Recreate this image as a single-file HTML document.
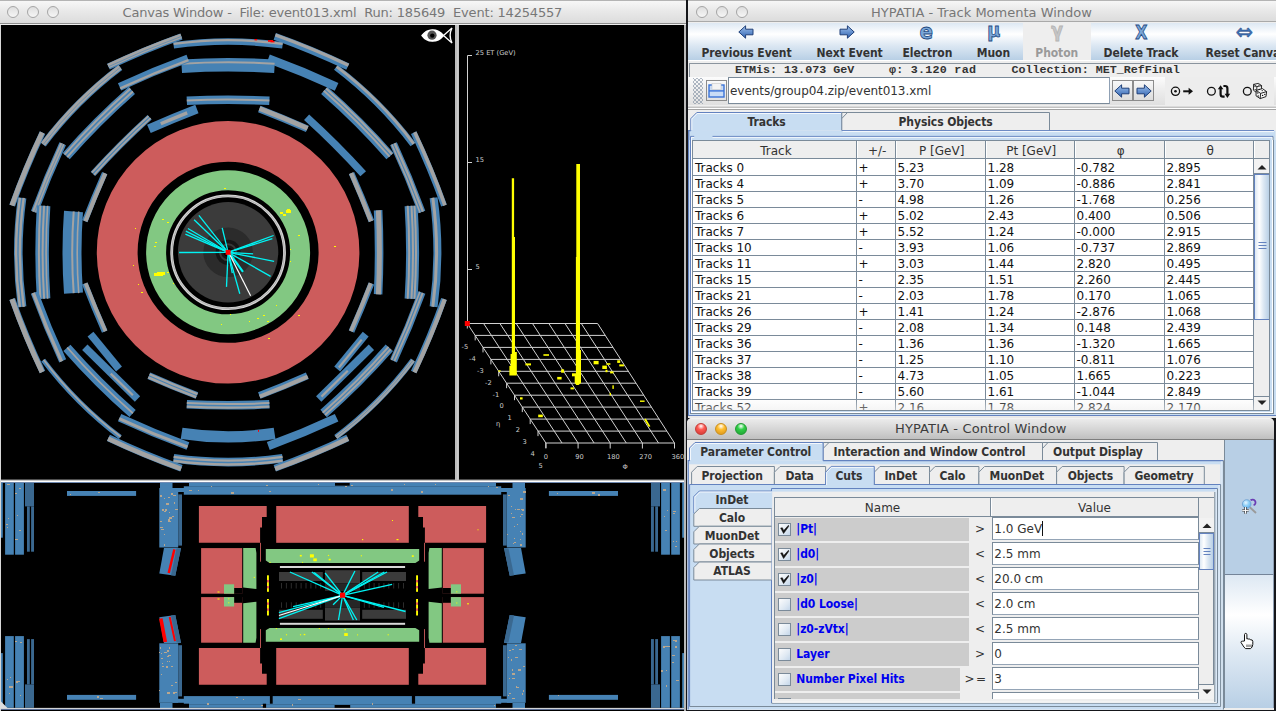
<!DOCTYPE html><html><head><meta charset="utf-8"><title>HYPATIA</title><style>
*{box-sizing:border-box;margin:0;padding:0}
html,body{width:1276px;height:711px;overflow:hidden;background:#15161a;font-family:'DejaVu Sans','Liberation Sans',sans-serif;font-size:12px;color:#333}
.abs,.abs *{position:absolute}
.t{white-space:pre;line-height:1}
.b{font-family:'DejaVu Sans Condensed','DejaVu Sans','Liberation Sans',sans-serif;font-weight:bold;letter-spacing:-0.08px;font-size:12px}
.r{letter-spacing:-0.35px}
.win{position:absolute;overflow:hidden}
.tbar{position:absolute;left:0;right:0;top:0;height:22px;background:linear-gradient(#f7f7f7,#e9e9e9 45%,#dcdcdc);border-bottom:1px solid #a9a9a9;border-top:1px solid #b4b4b4}
.tl{position:absolute;width:12px;height:12px;border-radius:6px;top:6px;border:1px solid #a5a5a5;background:linear-gradient(#dedede,#f6f6f6)}
.ttl{position:absolute;top:5.6px;font-size:13px;color:#777;letter-spacing:0;white-space:pre;line-height:14px}
.og{background:linear-gradient(#dde8f3 0%,#fff 30%,#dde8f3 60%,#b8cfe5 100%)}
.tab{position:absolute;height:18px;background:#eee;border:1px solid #7a8a99;border-bottom:none}
.cell{position:absolute;white-space:pre;line-height:16px;height:16px;font-size:12px;color:#111;letter-spacing:0}
</style></head><body><div class="win" style="left:0;top:0;width:686px;height:711px;background:#000"><svg width="686" height="711" viewBox="0 0 686 711" style="position:absolute;left:0;top:0"><rect x="0" y="0" width="686" height="711" fill="#000"/><g clip-path="url(#cxy)"><clipPath id="cxy"><rect x="1" y="25" width="454" height="455"/></clipPath><g fill="none"><path d="M378.1 210.3Q380.1 252.3 378.1 294.3" stroke="#4682b4" stroke-width="8.6"/><path d="M378.4 210.3Q380.4 252.3 378.4 294.3" stroke="#a3a3a3" stroke-width="5"/><path d="M411.1 205.8Q414.1 252.3 411.1 298.8" stroke="#4682b4" stroke-width="13"/><path d="M414.5 205.8Q417.5 252.3 414.5 298.8" stroke="#a3a3a3" stroke-width="2"/><path d="M411.5 205.8Q414.5 252.3 411.5 298.8" stroke="#a3a3a3" stroke-width="2"/><path d="M407.7 205.8Q410.7 252.3 407.7 298.8" stroke="#a3a3a3" stroke-width="2"/><path d="M433.6 197.8Q441.2 252.3 433.6 306.8" stroke="#4682b4" stroke-width="8"/><path d="M432.8 197.8Q440.4 252.3 432.8 306.8" stroke="#a3a3a3" stroke-width="3"/><path d="M351.5 173.1Q362 196.8 371.4 221.1" stroke="#4682b4" stroke-width="5.8"/><path d="M351.1 173.2Q361.6 197 371 221.3" stroke="#a3a3a3" stroke-width="4.4"/><path d="M393.5 143.8Q409.1 177.3 421.8 212.1" stroke="#4682b4" stroke-width="7.4"/><path d="M394.6 143.3Q410.2 176.9 422.9 211.7" stroke="#a3a3a3" stroke-width="2.4"/><path d="M391.8 144.4Q407.4 178 420.1 212.8" stroke="#a3a3a3" stroke-width="1.6"/><path d="M413.7 132.6Q430.7 168.4 444 205.6" stroke="#4682b4" stroke-width="6"/><path d="M414.7 132.3Q431.6 168 444.9 205.3" stroke="#a3a3a3" stroke-width="3.6"/><path d="M306.6 117.2Q336.3 144.1 363.2 173.8" stroke="#4682b4" stroke-width="7.6"/><path d="M324.3 90.4Q359.3 121.1 390 156.1" stroke="#4682b4" stroke-width="9.6"/><path d="M326.1 88.5Q361.1 119.3 391.9 154.3" stroke="#a3a3a3" stroke-width="2.2"/><path d="M323.8 90.8Q358.8 121.6 389.6 156.6" stroke="#a3a3a3" stroke-width="2"/><path d="M335.9 67.4Q379.8 100.6 413 144.5" stroke="#4682b4" stroke-width="6.2"/><path d="M336.6 66.7Q380.6 99.8 413.7 143.8" stroke="#a3a3a3" stroke-width="2.8"/><path d="M259.3 109Q283.6 118.4 307.3 128.9" stroke="#4682b4" stroke-width="7"/><path d="M259.5 108.5Q283.8 117.9 307.6 128.4" stroke="#a3a3a3" stroke-width="4.6"/><path d="M268.3 58.6Q303.1 71.3 336.6 86.9" stroke="#4682b4" stroke-width="8.6"/><path d="M274.8 36.4Q312 49.7 347.8 66.7" stroke="#4682b4" stroke-width="7"/><path d="M275.4 34.9Q312.6 48.2 348.4 65.2" stroke="#a3a3a3" stroke-width="3.2"/><path d="M186.8 100.8Q228.1 98.8 269.4 100.8" stroke="#4682b4" stroke-width="8.4"/><path d="M186.8 100.6Q228.1 98.6 269.4 100.6" stroke="#a3a3a3" stroke-width="2"/><path d="M181.6 66.3Q228.1 63.3 274.6 66.3" stroke="#4682b4" stroke-width="13.5"/><path d="M181.6 63.7Q228.1 60.7 274.6 63.7" stroke="#a3a3a3" stroke-width="2"/><path d="M173.6 45.3Q228.1 37.7 282.6 45.3" stroke="#4682b4" stroke-width="6.6"/><path d="M173.6 43.9Q228.1 36.3 282.6 43.9" stroke="#a3a3a3" stroke-width="2.4"/><path d="M148.9 128.9Q172.6 118.4 196.9 109" stroke="#4682b4" stroke-width="9"/><path d="M160.8 123.8Q173.9 118.1 187.2 112.8" stroke="#a3a3a3" stroke-width="3.4"/><path d="M119.6 86.9Q153.1 71.3 187.9 58.6" stroke="#4682b4" stroke-width="8"/><path d="M120.2 88.4Q153.7 72.8 188.5 60.1" stroke="#a3a3a3" stroke-width="2.6"/><path d="M108.4 66.7Q144.2 49.7 181.4 36.4" stroke="#4682b4" stroke-width="6.4"/><path d="M108.3 66.2Q144 49.2 181.2 36" stroke="#a3a3a3" stroke-width="4.8"/><path d="M108.4 66.7Q144.2 49.7 181.4 36.4" stroke="#4682b4" stroke-width="0.6"/><path d="M93 173.8Q119.9 144.1 149.6 117.2" stroke="#4682b4" stroke-width="6.2"/><path d="M91.9 172.7Q118.8 143 148.5 116.1" stroke="#a3a3a3" stroke-width="1.8"/><path d="M94 174.8Q120.9 145.1 150.6 118.2" stroke="#a3a3a3" stroke-width="1.8"/><path d="M66.2 156.1Q96.9 121.1 131.9 90.4" stroke="#4682b4" stroke-width="9.4"/><path d="M64.6 154.6Q95.4 119.6 130.4 88.8" stroke="#a3a3a3" stroke-width="2"/><path d="M67.2 157.1Q97.9 122.1 132.9 91.4" stroke="#a3a3a3" stroke-width="2"/><path d="M43.2 144.5Q76.4 100.6 120.3 67.4" stroke="#4682b4" stroke-width="6.4"/><path d="M43 144.3Q76.1 100.3 120.1 67.2" stroke="#a3a3a3" stroke-width="5"/><path d="M43.2 144.5Q76.4 100.6 120.3 67.4" stroke="#4682b4" stroke-width="0.6"/><path d="M84.8 221.1Q94.2 196.8 104.7 173.1" stroke="#4682b4" stroke-width="5.8"/><path d="M85.4 221.3Q94.8 197.1 105.3 173.3" stroke="#a3a3a3" stroke-width="4.2"/><path d="M34.4 212.1Q47.1 177.3 62.7 143.8" stroke="#4682b4" stroke-width="7.2"/><path d="M34.2 212Q46.8 177.2 62.5 143.6" stroke="#a3a3a3" stroke-width="4.6"/><path d="M34.4 212.1Q47.1 177.3 62.7 143.8" stroke="#4682b4" stroke-width="0.6"/><path d="M12.2 205.6Q25.5 168.4 42.5 132.6" stroke="#4682b4" stroke-width="6"/><path d="M11.9 205.5Q25.2 168.3 42.2 132.5" stroke="#a3a3a3" stroke-width="5"/><path d="M73.5 293.1Q70.5 252.3 73.5 211.5" stroke="#4682b4" stroke-width="19"/><path d="M73.7 293.1Q70.7 252.3 73.7 211.5" stroke="#a3a3a3" stroke-width="2"/><path d="M78.7 293.1Q75.7 252.3 78.7 211.5" stroke="#a3a3a3" stroke-width="1.6"/><path d="M43.6 298.8Q40.6 252.3 43.6 205.8" stroke="#4682b4" stroke-width="13.5"/><path d="M40.4 298.8Q37.4 252.3 40.4 205.8" stroke="#a3a3a3" stroke-width="2"/><path d="M44.1 298.8Q41.1 252.3 44.1 205.8" stroke="#a3a3a3" stroke-width="2"/><path d="M47.6 298.8Q44.6 252.3 47.6 205.8" stroke="#a3a3a3" stroke-width="1.6"/><path d="M22.1 306.8Q14.5 252.3 22.1 197.8" stroke="#4682b4" stroke-width="8.6"/><path d="M19.9 306.8Q12.3 252.3 19.9 197.8" stroke="#a3a3a3" stroke-width="2.4"/><path d="M23.7 306.8Q16.1 252.3 23.7 197.8" stroke="#a3a3a3" stroke-width="2.4"/><path d="M104.7 331.5Q94.2 307.8 84.8 283.5" stroke="#4682b4" stroke-width="6"/><path d="M105.5 331.2Q95 307.4 85.6 283.2" stroke="#a3a3a3" stroke-width="3.8"/><path d="M62.7 360.8Q47.1 327.3 34.4 292.5" stroke="#4682b4" stroke-width="7.6"/><path d="M61.6 361.3Q46 327.7 33.3 292.9" stroke="#a3a3a3" stroke-width="3.2"/><path d="M42.5 372Q25.5 336.2 12.2 299" stroke="#4682b4" stroke-width="6"/><path d="M42.1 372.1Q25.1 336.4 11.9 299.1" stroke="#a3a3a3" stroke-width="5"/><path d="M132.6 413.5Q97.6 382.8 66.9 347.8" stroke="#4682b4" stroke-width="9.4"/><path d="M132.9 413.2Q97.9 382.5 67.2 347.5" stroke="#a3a3a3" stroke-width="1.8"/><path d="M120.3 437.2Q76.4 404 43.2 360.1" stroke="#4682b4" stroke-width="4.8"/><path d="M120.7 436.8Q76.8 403.6 43.6 359.7" stroke="#a3a3a3" stroke-width="1.8"/><path d="M196.9 395.6Q172.6 386.2 148.9 375.7" stroke="#4682b4" stroke-width="7"/><path d="M196.2 397.2Q172 387.8 148.2 377.3" stroke="#a3a3a3" stroke-width="2.4"/><path d="M197.5 394.1Q173.3 384.7 149.5 374.2" stroke="#a3a3a3" stroke-width="2.2"/><path d="M187.9 446Q153.1 433.3 119.6 417.7" stroke="#4682b4" stroke-width="8"/><path d="M187.5 446.9Q152.7 434.2 119.2 418.6" stroke="#a3a3a3" stroke-width="3"/><path d="M181.4 468.2Q144.2 454.9 108.4 437.9" stroke="#4682b4" stroke-width="7"/><path d="M181.1 468.9Q143.9 455.6 108.1 438.7" stroke="#a3a3a3" stroke-width="4.6"/><path d="M269.4 404.3Q228.1 406.3 186.8 404.3" stroke="#4682b4" stroke-width="8.6"/><path d="M269.4 406.7Q228.1 408.7 186.8 406.7" stroke="#a3a3a3" stroke-width="2.2"/><path d="M269.4 403.1Q228.1 405.1 186.8 403.1" stroke="#a3a3a3" stroke-width="2"/><path d="M274.6 433.3Q228.1 440.5 181.6 433.3" stroke="#4682b4" stroke-width="11.4"/><path d="M282.6 458.3Q228.1 465.9 173.6 458.3" stroke="#4682b4" stroke-width="8.6"/><path d="M282.6 460.7Q228.1 468.3 173.6 460.7" stroke="#a3a3a3" stroke-width="2.4"/><path d="M282.6 456.9Q228.1 464.5 173.6 456.9" stroke="#a3a3a3" stroke-width="2.2"/><path d="M307.3 375.7Q283.6 386.2 259.3 395.6" stroke="#4682b4" stroke-width="7"/><path d="M307.7 376.6Q283.9 387.1 259.7 396.5" stroke="#a3a3a3" stroke-width="4"/><path d="M336.6 417.7Q303.1 433.3 268.3 446" stroke="#4682b4" stroke-width="8.4"/><path d="M347.8 437.9Q312 454.9 274.8 468.2" stroke="#4682b4" stroke-width="7"/><path d="M348.1 438.7Q312.3 455.6 275.1 468.9" stroke="#a3a3a3" stroke-width="4.6"/><path d="M389.3 347.8Q358.6 382.8 323.6 413.5" stroke="#4682b4" stroke-width="9.8"/><path d="M390.7 349.2Q360 384.2 325 414.9" stroke="#a3a3a3" stroke-width="2"/><path d="M388.5 346.9Q357.7 381.9 322.7 412.7" stroke="#a3a3a3" stroke-width="2"/><path d="M413 360.1Q379.8 404 335.9 437.2" stroke="#4682b4" stroke-width="5.4"/><path d="M413.2 360.3Q380.1 404.3 336.1 437.4" stroke="#a3a3a3" stroke-width="3.6"/><path d="M413.1 360.3Q380 404.2 336.1 437.3" stroke="#4682b4" stroke-width="0.6"/><path d="M371.4 283.5Q362 307.8 351.5 331.5" stroke="#4682b4" stroke-width="6"/><path d="M370.8 283.3Q361.4 307.5 350.9 331.3" stroke="#a3a3a3" stroke-width="4"/><path d="M421.8 292.5Q409.1 327.3 393.5 360.8" stroke="#4682b4" stroke-width="7.6"/><path d="M422.7 292.9Q410 327.7 394.4 361.2" stroke="#a3a3a3" stroke-width="2"/><path d="M419.9 291.7Q407.2 326.5 391.6 360.1" stroke="#a3a3a3" stroke-width="1.6"/><path d="M444 299Q430.7 336.2 413.7 372" stroke="#4682b4" stroke-width="6"/><path d="M444.7 299.3Q431.4 336.5 414.5 372.3" stroke="#a3a3a3" stroke-width="4.2"/><path d="M90.5 334.1L119 369" stroke="#4682b4" stroke-width="7.6"/><path d="M84.8 347.3L137.5 399" stroke="#4682b4" stroke-width="7.6"/><path d="M110.7 373.6L132.9 395.3" stroke="#a3a3a3" stroke-width="2.2"/><path d="M365.7 334.1L337.2 369" stroke="#4682b4" stroke-width="7.6"/><path d="M361.7 339.6L338.9 367.5" stroke="#a3a3a3" stroke-width="2.2"/><path d="M371.4 347.3L318.7 399" stroke="#4682b4" stroke-width="7.6"/><path d="M347.8 370.7L321.5 396.6" stroke="#a3a3a3" stroke-width="2.2"/></g><circle cx="228.1" cy="252.3" r="110.9" fill="none" stroke="#cd5c5c" stroke-width="40.8"/><circle cx="228.1" cy="252.3" r="72" fill="none" stroke="#82c882" stroke-width="20"/><circle cx="228.1" cy="252.3" r="56.4" fill="none" stroke="#d4d4d4" stroke-width="2.8"/><circle cx="228.1" cy="252.3" r="56.4" fill="none" stroke="#a0a0a0" stroke-width="0.7"/><circle cx="228.1" cy="252.3" r="50.2" fill="#3b3b3b"/><circle cx="228.1" cy="252.3" r="24.8" fill="#2b2b2b"/><circle cx="228.1" cy="252.3" r="12.5" fill="#161616"/><circle cx="228.1" cy="252.3" r="8" fill="none" stroke="#383838" stroke-width="2"/><circle cx="228.1" cy="252.3" r="4.5" fill="#000"/><g stroke="#00f4f4" stroke-width="1.3" fill="none"><path d="M228.1 252.3L198.9 215.4"/><path d="M228.1 252.3L194.1 219.7"/><path d="M228.1 252.3L187.9 228.5"/><path d="M228.1 252.3L185.9 231.2"/><path d="M228.1 252.3L185.4 234.2"/><path d="M228.1 252.3L179.1 252.5"/><path d="M228.1 252.3L222.2 227.9"/><path d="M228.1 252.3L273.6 235.5"/><path d="M228.1 252.3L272.4 238.7"/><path d="M228.1 252.3L253.1 253.8"/><path d="M228.1 252.3L274.1 261.3"/><path d="M228.1 252.3L270.6 276.4"/><path d="M228.1 252.3L239.8 293.7"/><path d="M228.1 252.3L226.5 286.9"/><path d="M228.1 252.3L232.3 273.1"/><path d="M231.1 255.3L243 271.8" stroke-width="2.2"/><path d="M229.1 253.3L250.6 295.7" stroke="#fff" stroke-width="1.2"/></g><g fill="#ffff00" shape-rendering="crispEdges"><rect x="224" y="188" width="2" height="1"/><rect x="286" y="210" width="5" height="3"/><rect x="283" y="214" width="3" height="2"/><rect x="280" y="212" width="3" height="2"/><rect x="287" y="209" width="3" height="2"/><rect x="162" y="219" width="2" height="1"/><rect x="167" y="222" width="2" height="1"/><rect x="135" y="228" width="1" height="1"/><rect x="155" y="242" width="2" height="1"/><rect x="154" y="246" width="2" height="1"/><rect x="298" y="235" width="2" height="1"/><rect x="334" y="246" width="2" height="1"/><rect x="290" y="249" width="1" height="1"/><rect x="290" y="261" width="1" height="1"/><rect x="157" y="272" width="6" height="4"/><rect x="154" y="273" width="4" height="3"/><rect x="161" y="272" width="4" height="3"/><rect x="167" y="272" width="2" height="1"/><rect x="133" y="265" width="1" height="1"/><rect x="138" y="284" width="1" height="1"/><rect x="141" y="292" width="2" height="1"/><rect x="173" y="283" width="1" height="1"/><rect x="230" y="314" width="1" height="1"/><rect x="221" y="324" width="1" height="1"/><rect x="249" y="321" width="1" height="1"/><rect x="257" y="318" width="2" height="1"/><rect x="263" y="315" width="2" height="1"/><rect x="267" y="321" width="2" height="1"/><rect x="276" y="305" width="1" height="1"/><rect x="298" y="315" width="2" height="1"/><rect x="268" y="338" width="2" height="1"/></g><rect x="254.5" y="39" width="2.6" height="1.4" fill="#ff0000"/><rect x="268" y="40" width="5" height="1.8" fill="#ff0000"/><rect x="270.5" y="41" width="4" height="1.4" fill="#ff0000"/><rect x="258" y="430" width="1" height="1.8" fill="#ff0000"/><rect x="225.6" y="249.8" width="5" height="5" fill="#ff0000"/></g><g stroke="#d2d2d2" stroke-width="1" fill="none" shape-rendering="auto"><path d="M467.5 55.5V324"/><path d="M467.5 55.5h4.5"/><path d="M467.5 162.5h4.5"/><path d="M467.5 269.5h4.5"/><path d="M467.3 323.5H597.6"/><path d="M467.3 323.5v5"/><path d="M475.2 335.4H605.3"/><path d="M475.2 335.4v5"/><path d="M483 347.4H613"/><path d="M483 347.4v5"/><path d="M490.9 359.4H620.7"/><path d="M490.9 359.4v5"/><path d="M498.7 371.3H628.4"/><path d="M498.7 371.3v5"/><path d="M506.6 383.2H636.1"/><path d="M506.6 383.2v5"/><path d="M514.5 395.2H643.8"/><path d="M514.5 395.2v5"/><path d="M522.3 407.1H651.5"/><path d="M522.3 407.1v5"/><path d="M530.2 419.1H659.2"/><path d="M530.2 419.1v5"/><path d="M538 431.1H666.8"/><path d="M538 431.1v5"/><path d="M545.9 443H674.5"/><path d="M545.9 443v5"/><path d="M467.3 323.5L545.9 443"/><path d="M483.6 323.5L562 443"/><path d="M499.9 323.5L578.1 443"/><path d="M516.2 323.5L594.1 443"/><path d="M532.5 323.5L610.2 443"/><path d="M548.8 323.5L626.3 443"/><path d="M565 323.5L642.4 443"/><path d="M581.3 323.5L658.5 443"/><path d="M597.6 323.5L674.5 443"/><path d="M545.9 443v5.5"/><path d="M578.1 443v5.5"/><path d="M610.2 443v5.5"/><path d="M642.4 443v5.5"/><path d="M674.5 443v5.5"/></g><g font-family="'DejaVu Sans','Liberation Sans',sans-serif" font-size="6.7" fill="#cfcfcf"><text x="475.5" y="55">25 ET (GeV)</text><text x="475.5" y="161.5">15</text><text x="475.5" y="269">5</text><text x="461.5" y="349">-5</text><text x="469" y="360.5">-4</text><text x="477" y="372.5">-3</text><text x="485" y="384.5">-2</text><text x="492.5" y="396.5">-1</text><text x="499.5" y="408.3">0</text><text x="507.5" y="420.2">1</text><text x="515.7" y="432.2">2</text><text x="522.5" y="444">3</text><text x="530.5" y="456">4</text><text x="538.5" y="467.7">5</text><text x="496" y="426">η</text><text x="543.8" y="459">0</text><text x="575.3" y="459">90</text><text x="607" y="459">180</text><text x="639.3" y="459">270</text><text x="671.5" y="459">360</text><text x="622.5" y="468.5">Φ</text></g><g fill="#ffff00"><rect x="543.4" y="354.2" width="5.6" height="1.6"/><rect x="525.4" y="363.4" width="5.6" height="2"/><rect x="498.2" y="370.3" width="2.4" height="1.4"/><rect x="561.1" y="369.3" width="3" height="3.4"/><rect x="557.2" y="376.9" width="4.4" height="2.6"/><rect x="572" y="373.3" width="4" height="3"/><rect x="570.5" y="387.4" width="3.4" height="2"/><rect x="593.6" y="360.9" width="5" height="3.4"/><rect x="602.3" y="365.6" width="4.6" height="3.4"/><rect x="606.4" y="363.2" width="4" height="1.6"/><rect x="605.5" y="369.8" width="2" height="2.4"/><rect x="610.1" y="371.4" width="3.4" height="2"/><rect x="617.2" y="360.3" width="3" height="2.6"/><rect x="619.3" y="364.4" width="4.6" height="2"/><rect x="612.4" y="385.3" width="1.4" height="3.6"/><rect x="609.6" y="392.9" width="1.4" height="2.6"/><rect x="640" y="400.5" width="4.6" height="1.4"/><rect x="520" y="397.3" width="2.6" height="2.2"/><rect x="538.2" y="414.6" width="4.6" height="2.6"/><path d="M644.2 419.4l1.6-.8l4.6 7.6l-1.6.9z"/><path d="M511.8 178.3h2.3V237h0.9V352h1.8v23.5h-7.4V366h1.2v-12h1.2z"/><path d="M576.3 164h3.7V350h1.0v33l-2.4 2h-2.3l-1.6-2v-9h1.2V257h0.4z"/></g><rect x="464.8" y="321" width="5" height="5" fill="#ff0000"/><rect x="1" y="483" width="1.8" height="54.7" fill="#4682b4"/><rect x="1" y="653.1" width="1.8" height="54.7" fill="#4682b4"/><rect x="682.2" y="483" width="1.8" height="54.7" fill="#4682b4"/><rect x="682.2" y="653.1" width="1.8" height="54.7" fill="#4682b4"/><rect x="5.1" y="483" width="8.7" height="71.7" fill="#4682b4"/><rect x="5.1" y="636.1" width="8.7" height="71.7" fill="#4682b4"/><rect x="671.2" y="483" width="8.7" height="71.7" fill="#4682b4"/><rect x="671.2" y="636.1" width="8.7" height="71.7" fill="#4682b4"/><rect x="15.1" y="483" width="8.8" height="71.7" fill="#4682b4"/><rect x="15.1" y="636.1" width="8.8" height="71.7" fill="#4682b4"/><rect x="661.1" y="483" width="8.8" height="71.7" fill="#4682b4"/><rect x="661.1" y="636.1" width="8.8" height="71.7" fill="#4682b4"/><rect x="25" y="483" width="9" height="23.4" fill="#3a6890"/><rect x="25" y="684.4" width="9" height="23.4" fill="#3a6890"/><rect x="651" y="483" width="9" height="23.4" fill="#3a6890"/><rect x="651" y="684.4" width="9" height="23.4" fill="#3a6890"/><rect x="27" y="506.4" width="2.8" height="45.3" fill="#3a6890"/><rect x="27" y="639.1" width="2.8" height="45.3" fill="#3a6890"/><rect x="655.2" y="506.4" width="2.8" height="45.3" fill="#3a6890"/><rect x="655.2" y="639.1" width="2.8" height="45.3" fill="#3a6890"/><rect x="31.1" y="506.4" width="2.9" height="45.3" fill="#3a6890"/><rect x="31.1" y="639.1" width="2.9" height="45.3" fill="#3a6890"/><rect x="651" y="506.4" width="2.9" height="45.3" fill="#3a6890"/><rect x="651" y="639.1" width="2.9" height="45.3" fill="#3a6890"/><rect x="67" y="491" width="69.1" height="4.9" fill="#4682b4"/><rect x="67" y="694.9" width="69.1" height="4.9" fill="#4682b4"/><rect x="548.9" y="491" width="69.1" height="4.9" fill="#4682b4"/><rect x="548.9" y="694.9" width="69.1" height="4.9" fill="#4682b4"/><rect x="159.3" y="488" width="18.9" height="59.5" fill="#4682b4"/><rect x="159.3" y="643.3" width="18.9" height="59.5" fill="#4682b4"/><rect x="506.8" y="488" width="18.9" height="59.5" fill="#4682b4"/><rect x="506.8" y="643.3" width="18.9" height="59.5" fill="#4682b4"/><rect x="178.2" y="494.4" width="3.8" height="51.2" fill="#3a6890"/><rect x="178.2" y="645.2" width="3.8" height="51.2" fill="#3a6890"/><rect x="503" y="494.4" width="3.8" height="51.2" fill="#3a6890"/><rect x="503" y="645.2" width="3.8" height="51.2" fill="#3a6890"/><rect x="160" y="482.8" width="12.5" height="5.2" fill="#4682b4"/><rect x="160" y="702.8" width="12.5" height="5.2" fill="#4682b4"/><rect x="512.5" y="482.8" width="12.5" height="5.2" fill="#4682b4"/><rect x="512.5" y="702.8" width="12.5" height="5.2" fill="#4682b4"/><rect x="172.5" y="488" width="16" height="4" fill="#4682b4"/><rect x="172.5" y="698.8" width="16" height="4" fill="#4682b4"/><rect x="496.5" y="488" width="16" height="4" fill="#4682b4"/><rect x="496.5" y="698.8" width="16" height="4" fill="#4682b4"/><polygon points="164,547.9 181,547.9 175.3,575.8 159.3,573.5" fill="#4682b4"/><polygon points="164,642.9 181,642.9 175.3,615 159.3,617.3" fill="#4682b4"/><polygon points="521,547.9 504,547.9 509.7,575.8 525.7,573.5" fill="#4682b4"/><polygon points="521,642.9 504,642.9 509.7,615 525.7,617.3" fill="#4682b4"/><polygon points="176.5,548.5 181,547.9 175.3,575.8 171,575.2" fill="#3a6890"/><polygon points="176.5,642.3 181,642.9 175.3,615 171,615.6" fill="#3a6890"/><polygon points="508.5,548.5 504,547.9 509.7,575.8 514,575.2" fill="#3a6890"/><polygon points="508.5,642.3 504,642.9 509.7,615 514,615.6" fill="#3a6890"/><rect x="183.8" y="486.3" width="317.4" height="8.4" fill="#4682b4"/><rect x="183.8" y="696.1" width="317.4" height="8.4" fill="#4682b4"/><rect x="189" y="483" width="307" height="3.5" fill="#4682b4"/><rect x="189" y="704.3" width="307" height="3.5" fill="#4682b4"/><rect x="335" y="483" width="14.7" height="2.7" fill="#000"/><rect x="269.9" y="696" width="2.8" height="7.7" fill="#000"/><rect x="262.8" y="703.7" width="3.3" height="4.3" fill="#000"/><rect x="411.9" y="696" width="3.2" height="7.7" fill="#000"/><rect x="334.6" y="705" width="15.6" height="3" fill="#000"/><rect x="180" y="703.7" width="9" height="4.3" fill="#000"/><rect x="496" y="703.7" width="9" height="4.3" fill="#000"/><polygon points="198.9,506 266.7,506 266.7,517 262,517 262,527.4 260.1,527.4 260.1,542.8 198.9,542.8" fill="#cd5c5c"/><polygon points="198.9,684.8 266.7,684.8 266.7,673.8 262,673.8 262,663.4 260.1,663.4 260.1,648 198.9,648" fill="#cd5c5c"/><polygon points="486.1,506 418.3,506 418.3,517 423,517 423,527.4 424.9,527.4 424.9,542.8 486.1,542.8" fill="#cd5c5c"/><polygon points="486.1,684.8 418.3,684.8 418.3,673.8 423,673.8 423,663.4 424.9,663.4 424.9,648 486.1,648" fill="#cd5c5c"/><rect x="276.2" y="506" width="132.6" height="36.8" fill="#cd5c5c"/><rect x="276.2" y="648" width="132.6" height="36.8" fill="#cd5c5c"/><rect x="201.1" y="548.1" width="41.1" height="45.6" fill="#cd5c5c"/><rect x="201.1" y="597.1" width="41.1" height="45.6" fill="#cd5c5c"/><rect x="442.8" y="548.1" width="41.1" height="45.6" fill="#cd5c5c"/><rect x="442.8" y="597.1" width="41.1" height="45.6" fill="#cd5c5c"/><polygon points="234.1,588 242.3,588 242.3,593.8 234.1,593.8" fill="#000"/><polygon points="234.1,602.8 242.3,602.8 242.3,597 234.1,597" fill="#000"/><polygon points="450.9,588 442.7,588 442.7,593.8 450.9,593.8" fill="#000"/><polygon points="450.9,602.8 442.7,602.8 442.7,597 450.9,597" fill="#000"/><rect x="260.1" y="542.8" width="0.9" height="18.9" fill="#cd5c5c"/><rect x="260.1" y="629.1" width="0.9" height="18.9" fill="#cd5c5c"/><rect x="424" y="542.8" width="0.9" height="18.9" fill="#cd5c5c"/><rect x="424" y="629.1" width="0.9" height="18.9" fill="#cd5c5c"/><polygon points="243.2,548.1 255.6,548.1 256.4,553 256.4,589 243.2,587.6" fill="#82c882"/><polygon points="243.2,642.7 255.6,642.7 256.4,637.8 256.4,601.8 243.2,603.2" fill="#82c882"/><polygon points="441.8,548.1 429.4,548.1 428.6,553 428.6,589 441.8,587.6" fill="#82c882"/><polygon points="441.8,642.7 429.4,642.7 428.6,637.8 428.6,601.8 441.8,603.2" fill="#82c882"/><rect x="224" y="584.3" width="10.1" height="9.4" fill="#82c882"/><rect x="224" y="597.1" width="10.1" height="9.4" fill="#82c882"/><rect x="450.9" y="584.3" width="10.1" height="9.4" fill="#82c882"/><rect x="450.9" y="597.1" width="10.1" height="9.4" fill="#82c882"/><polygon points="265.8,549 419.2,549 419.2,560.5 415.4,562.9 269.6,562.9 265.8,560.5" fill="#82c882"/><polygon points="265.8,641.8 419.2,641.8 419.2,630.3 415.4,627.9 269.6,627.9 265.8,630.3" fill="#82c882"/><rect x="279.9" y="566" width="125.2" height="2" fill="#d8d8d8"/><rect x="279.9" y="622.8" width="125.2" height="2" fill="#d8d8d8"/><rect x="279" y="572" width="43.8" height="9" fill="#3b3b3b"/><rect x="279" y="609.8" width="43.8" height="9" fill="#3b3b3b"/><rect x="362.2" y="572" width="43.8" height="9" fill="#3b3b3b"/><rect x="362.2" y="609.8" width="43.8" height="9" fill="#3b3b3b"/><rect x="325" y="570.2" width="35" height="13.1" fill="#3b3b3b"/><rect x="325" y="607.5" width="35" height="13.1" fill="#3b3b3b"/><rect x="325" y="583.3" width="35" height="7.7" fill="#262626"/><rect x="325" y="599.8" width="35" height="7.7" fill="#262626"/><rect x="281" y="583" width="1" height="5.5" fill="#2c2c2c"/><rect x="281" y="602.3" width="1" height="5.5" fill="#2c2c2c"/><rect x="403" y="583" width="1" height="5.5" fill="#2c2c2c"/><rect x="403" y="602.3" width="1" height="5.5" fill="#2c2c2c"/><rect x="285.9" y="583" width="1" height="5.5" fill="#2c2c2c"/><rect x="285.9" y="602.3" width="1" height="5.5" fill="#2c2c2c"/><rect x="398.1" y="583" width="1" height="5.5" fill="#2c2c2c"/><rect x="398.1" y="602.3" width="1" height="5.5" fill="#2c2c2c"/><rect x="290.8" y="583" width="1" height="5.5" fill="#2c2c2c"/><rect x="290.8" y="602.3" width="1" height="5.5" fill="#2c2c2c"/><rect x="393.2" y="583" width="1" height="5.5" fill="#2c2c2c"/><rect x="393.2" y="602.3" width="1" height="5.5" fill="#2c2c2c"/><rect x="295.7" y="583" width="1" height="5.5" fill="#2c2c2c"/><rect x="295.7" y="602.3" width="1" height="5.5" fill="#2c2c2c"/><rect x="388.3" y="583" width="1" height="5.5" fill="#2c2c2c"/><rect x="388.3" y="602.3" width="1" height="5.5" fill="#2c2c2c"/><rect x="300.6" y="583" width="1" height="5.5" fill="#2c2c2c"/><rect x="300.6" y="602.3" width="1" height="5.5" fill="#2c2c2c"/><rect x="383.4" y="583" width="1" height="5.5" fill="#2c2c2c"/><rect x="383.4" y="602.3" width="1" height="5.5" fill="#2c2c2c"/><rect x="305.5" y="583" width="1" height="5.5" fill="#2c2c2c"/><rect x="305.5" y="602.3" width="1" height="5.5" fill="#2c2c2c"/><rect x="378.5" y="583" width="1" height="5.5" fill="#2c2c2c"/><rect x="378.5" y="602.3" width="1" height="5.5" fill="#2c2c2c"/><rect x="310.4" y="583" width="1" height="5.5" fill="#2c2c2c"/><rect x="310.4" y="602.3" width="1" height="5.5" fill="#2c2c2c"/><rect x="373.6" y="583" width="1" height="5.5" fill="#2c2c2c"/><rect x="373.6" y="602.3" width="1" height="5.5" fill="#2c2c2c"/><rect x="315.3" y="583" width="1" height="5.5" fill="#2c2c2c"/><rect x="315.3" y="602.3" width="1" height="5.5" fill="#2c2c2c"/><rect x="368.7" y="583" width="1" height="5.5" fill="#2c2c2c"/><rect x="368.7" y="602.3" width="1" height="5.5" fill="#2c2c2c"/><rect x="320.2" y="583" width="1" height="5.5" fill="#2c2c2c"/><rect x="320.2" y="602.3" width="1" height="5.5" fill="#2c2c2c"/><rect x="363.8" y="583" width="1" height="5.5" fill="#2c2c2c"/><rect x="363.8" y="602.3" width="1" height="5.5" fill="#2c2c2c"/><rect x="267" y="575.3" width="1.9" height="16.5" fill="#ffff00"/><rect x="267" y="599" width="1.9" height="16.5" fill="#ffff00"/><rect x="416.1" y="575.3" width="1.9" height="16.5" fill="#ffff00"/><rect x="416.1" y="599" width="1.9" height="16.5" fill="#ffff00"/><rect x="267" y="580" width="1.9" height="2.4" fill="#e05050"/><rect x="267" y="608.4" width="1.9" height="2.4" fill="#e05050"/><rect x="416.1" y="580" width="1.9" height="2.4" fill="#e05050"/><rect x="416.1" y="608.4" width="1.9" height="2.4" fill="#e05050"/><rect x="267" y="586" width="1.9" height="2.4" fill="#e05050"/><rect x="267" y="602.4" width="1.9" height="2.4" fill="#e05050"/><rect x="416.1" y="586" width="1.9" height="2.4" fill="#e05050"/><rect x="416.1" y="602.4" width="1.9" height="2.4" fill="#e05050"/><g fill="#b9a78f" shape-rendering="crispEdges"><rect x="164" y="498" width="1" height="1"/><rect x="173" y="495" width="3" height="1"/><rect x="174" y="502" width="1" height="2"/><rect x="166" y="503" width="3" height="2"/><rect x="160" y="521" width="1" height="1"/><rect x="169" y="512" width="1" height="1"/><rect x="168" y="497" width="2" height="1"/><rect x="168" y="521" width="3" height="1"/><rect x="161" y="521" width="1" height="1"/><rect x="161" y="529" width="3" height="1"/><rect x="169" y="517" width="3" height="2"/><rect x="172" y="516" width="2" height="1"/><rect x="164" y="534" width="1" height="1"/><rect x="168" y="519" width="2" height="2"/><rect x="164" y="544" width="1" height="2"/><rect x="162" y="509" width="2" height="2"/><rect x="160" y="527" width="3" height="1"/><rect x="165" y="509" width="2" height="2"/><rect x="160" y="495" width="2" height="2"/><rect x="171" y="493" width="2" height="2"/><rect x="164" y="511" width="2" height="1"/><rect x="175" y="509" width="3" height="1"/><rect x="167" y="656" width="2" height="1"/><rect x="171" y="666" width="2" height="1"/><rect x="162" y="666" width="2" height="1"/><rect x="173" y="692" width="2" height="2"/><rect x="175" y="682" width="2" height="1"/><rect x="161" y="653" width="1" height="1"/><rect x="159" y="690" width="1" height="1"/><rect x="164" y="652" width="3" height="1"/><rect x="169" y="661" width="1" height="1"/><rect x="167" y="692" width="3" height="2"/><rect x="166" y="666" width="2" height="2"/><rect x="160" y="647" width="1" height="2"/><rect x="162" y="663" width="1" height="1"/><rect x="159" y="652" width="1" height="1"/><rect x="169" y="647" width="1" height="2"/><rect x="161" y="658" width="2" height="1"/><rect x="167" y="650" width="2" height="2"/><rect x="167" y="661" width="1" height="1"/><rect x="171" y="685" width="2" height="1"/><rect x="168" y="655" width="3" height="1"/><rect x="161" y="674" width="1" height="1"/><rect x="175" y="692" width="2" height="1"/><rect x="521" y="509" width="1" height="1"/><rect x="517" y="524" width="1" height="1"/><rect x="520" y="531" width="1" height="1"/><rect x="515" y="509" width="1" height="1"/><rect x="520" y="516" width="1" height="1"/><rect x="514" y="542" width="2" height="1"/><rect x="508" y="495" width="2" height="1"/><rect x="512" y="517" width="3" height="1"/><rect x="514" y="526" width="1" height="1"/><rect x="522" y="533" width="1" height="2"/><rect x="521" y="514" width="2" height="1"/><rect x="520" y="544" width="2" height="2"/><rect x="513" y="543" width="1" height="1"/><rect x="523" y="491" width="3" height="2"/><rect x="520" y="498" width="3" height="2"/><rect x="517" y="509" width="3" height="1"/><rect x="507" y="534" width="1" height="1"/><rect x="514" y="538" width="1" height="1"/><rect x="511" y="506" width="1" height="1"/><rect x="511" y="513" width="1" height="1"/><rect x="522" y="509" width="2" height="2"/><rect x="520" y="539" width="1" height="1"/><rect x="515" y="645" width="2" height="1"/><rect x="517" y="687" width="1" height="1"/><rect x="509" y="678" width="1" height="1"/><rect x="512" y="673" width="3" height="2"/><rect x="519" y="649" width="3" height="1"/><rect x="511" y="659" width="1" height="2"/><rect x="516" y="686" width="1" height="2"/><rect x="512" y="698" width="3" height="1"/><rect x="518" y="669" width="3" height="2"/><rect x="515" y="657" width="3" height="1"/><rect x="522" y="693" width="1" height="2"/><rect x="509" y="650" width="2" height="1"/><rect x="508" y="657" width="1" height="1"/><rect x="518" y="687" width="1" height="1"/><rect x="509" y="693" width="2" height="1"/><rect x="519" y="649" width="2" height="1"/><rect x="523" y="690" width="1" height="2"/><rect x="523" y="666" width="2" height="1"/><rect x="512" y="649" width="2" height="1"/><rect x="512" y="669" width="1" height="2"/><rect x="512" y="678" width="3" height="1"/><rect x="508" y="695" width="1" height="1"/><rect x="211" y="486" width="1" height="1"/><rect x="421" y="491" width="2" height="2"/><rect x="231" y="492" width="3" height="2"/><rect x="404" y="484" width="1" height="1"/><rect x="318" y="484" width="1" height="1"/><rect x="435" y="484" width="1" height="1"/><rect x="267" y="485" width="1" height="1"/><rect x="496" y="487" width="2" height="1"/><rect x="198" y="490" width="1" height="1"/><rect x="266" y="485" width="2" height="1"/><rect x="351" y="485" width="2" height="1"/><rect x="269" y="491" width="2" height="1"/><rect x="189" y="490" width="3" height="1"/><rect x="345" y="486" width="2" height="1"/><rect x="391" y="489" width="2" height="2"/><rect x="488" y="486" width="1" height="1"/><rect x="292" y="704" width="1" height="2"/><rect x="494" y="705" width="1" height="1"/><rect x="207" y="703" width="2" height="2"/><rect x="236" y="697" width="2" height="1"/><rect x="372" y="703" width="1" height="2"/><rect x="243" y="699" width="1" height="1"/><rect x="298" y="699" width="3" height="1"/><rect x="261" y="705" width="2" height="1"/><rect x="7" y="484" width="2" height="1"/><rect x="8" y="518" width="1" height="1"/><rect x="8" y="484" width="2" height="1"/><rect x="6" y="524" width="2" height="1"/><rect x="7" y="527" width="1" height="1"/><rect x="9" y="686" width="3" height="2"/><rect x="10" y="686" width="2" height="1"/><rect x="7" y="679" width="1" height="1"/><rect x="10" y="686" width="3" height="2"/><rect x="9" y="693" width="1" height="1"/><rect x="10" y="677" width="1" height="1"/><rect x="15" y="493" width="2" height="1"/><rect x="17" y="515" width="1" height="1"/><rect x="19" y="530" width="2" height="1"/><rect x="15" y="539" width="3" height="1"/><rect x="19" y="488" width="2" height="1"/><rect x="20" y="695" width="1" height="1"/><rect x="16" y="681" width="2" height="2"/><rect x="20" y="642" width="2" height="1"/><rect x="19" y="681" width="1" height="1"/><rect x="17" y="681" width="2" height="1"/><rect x="15" y="641" width="2" height="1"/><rect x="665" y="530" width="2" height="1"/><rect x="664" y="516" width="1" height="1"/><rect x="663" y="489" width="2" height="1"/><rect x="663" y="489" width="3" height="2"/><rect x="667" y="510" width="1" height="1"/><rect x="664" y="646" width="3" height="1"/><rect x="667" y="646" width="3" height="1"/><rect x="666" y="685" width="1" height="2"/><rect x="666" y="670" width="1" height="1"/><rect x="661" y="670" width="2" height="2"/><rect x="663" y="646" width="2" height="2"/><rect x="673" y="541" width="1" height="1"/><rect x="676" y="541" width="1" height="1"/><rect x="675" y="546" width="2" height="1"/><rect x="673" y="511" width="3" height="1"/><rect x="673" y="513" width="2" height="1"/><rect x="673" y="640" width="2" height="1"/><rect x="672" y="655" width="3" height="1"/><rect x="672" y="662" width="2" height="1"/><rect x="676" y="680" width="3" height="1"/><rect x="675" y="640" width="2" height="2"/><rect x="675" y="646" width="2" height="2"/><rect x="70" y="494" width="1" height="1"/><rect x="98" y="492" width="2" height="1"/><rect x="598" y="494" width="2" height="2"/><rect x="592" y="492" width="3" height="2"/><rect x="557" y="493" width="1" height="1"/><rect x="100" y="698" width="3" height="1"/><rect x="97" y="696" width="2" height="2"/><rect x="558" y="695" width="1" height="1"/></g><g stroke="#00f4f4" stroke-width="1.3" fill="none"><path d="M342.6 595.4L289.9 572"/><path d="M342.6 595.4L311.9 572"/><path d="M342.6 595.4L314.2 572.5"/><path d="M342.6 595.4L325.1 573"/><path d="M342.6 595.4L354.9 571"/><path d="M342.6 595.4L378.2 572"/><path d="M342.6 595.4L384.3 572"/><path d="M342.6 595.4L387 572"/><path d="M342.6 595.4L392.1 584.4"/><path d="M342.6 595.4L405.5 611.5"/><path d="M342.6 595.4L383.9 607.3"/><path d="M342.6 595.4L356.8 620"/><path d="M342.6 595.4L353.4 620"/><path d="M342.6 595.4L338.5 620"/><path d="M342.6 595.4L333.1 604.7"/><path d="M342.6 595.4L278.9 612.7"/><path d="M342.6 595.4L278.9 618.6"/><path d="M342.6 595.4L293 606.6"/><path d="M342.6 595.4L278.9 615.5" stroke="#fff" stroke-width="1.2"/></g><rect x="340" y="592.6" width="5.2" height="5.2" fill="#ff0000"/><path d="M174.4 549.4L168.7 573" stroke="#ff0000" stroke-width="2.4"/><path d="M160.8 618.5L165.3 642" stroke="#ff0000" stroke-width="3.6"/><path d="M169.7 617L175 641.1" stroke="#ff0000" stroke-width="2"/><g fill="#ffff00"><rect x="299.8" y="554.9" width="2" height="1.6"/><rect x="309.9" y="554.3" width="4" height="3.2"/><rect x="313.3" y="558.4" width="3.5" height="2.8"/><rect x="327.9" y="554.9" width="1.2" height="1"/><rect x="328.7" y="558.8" width="2" height="1.6"/><rect x="360.8" y="555.3" width="1.2" height="1"/><rect x="411.8" y="555.3" width="2" height="1.6"/><rect x="302.1" y="561.9" width="1" height="1"/><rect x="269.6" y="561.9" width="1" height="1"/><rect x="344.2" y="633.1" width="3.6" height="2.9"/><rect x="344.4" y="629" width="1.6" height="1.3"/><rect x="285.9" y="634.3" width="1.2" height="1"/><rect x="299.9" y="634.3" width="1.2" height="1"/><rect x="303.7" y="633.9" width="1.6" height="1.3"/><rect x="280" y="638.4" width="2" height="1.6"/><rect x="357.1" y="634.4" width="1" height="1"/><rect x="387.6" y="634.3" width="1.2" height="1"/><rect x="318.8" y="628" width="1" height="1"/><rect x="328.1" y="628" width="1" height="1"/><rect x="275.8" y="628" width="1" height="1"/><rect x="253.7" y="576.9" width="1.2" height="1"/><rect x="362" y="539" width="1.2" height="1.2"/><rect x="396.5" y="539" width="2" height="1.2"/><rect x="217.5" y="591.5" width="2" height="1"/><rect x="217.5" y="598.5" width="2" height="1"/><rect x="228.3" y="598.3" width="1" height="1"/><rect x="228.3" y="602.3" width="1" height="1"/><rect x="477.5" y="529.3" width="1" height="1"/><rect x="456.3" y="591.3" width="1" height="1"/><rect x="456.3" y="602.5" width="1" height="1"/><rect x="467" y="603.3" width="2" height="1"/><rect x="392" y="520" width="1" height="1"/></g><g stroke="#fff" fill="none" stroke-width="1.3"><path d="M422 35.5C427 28.5 437 27.5 443.5 35.5C437 43.5 427 42.5 422 35.5Z" fill="#fff"/><path d="M443.5 35.5L452 28C449.5 33 449.5 38 452 43Z" fill="#000"/></g><circle cx="432" cy="35.2" r="4.6" fill="#555"/><circle cx="432.3" cy="35.6" r="2.2" fill="#000"/><rect x="455" y="24" width="2.2" height="456" fill="#bdbdbd"/><rect x="457.2" y="24" width="1.6" height="456" fill="#f4f4f4"/><rect x="0" y="479.6" width="686" height="1.6" fill="#c4c4c4"/><rect x="0" y="481" width="686" height="1.2" fill="#fff"/><rect x="0" y="482.2" width="686" height="0.8" fill="#7f9fd0"/><rect x="0" y="707.9" width="685" height="1" fill="#f4f4f4"/><rect x="0" y="708.9" width="685" height="1" fill="#6f87b7"/><rect x="0" y="709.9" width="686" height="1.2" fill="#000"/><rect x="0" y="23" width="1" height="688" fill="#d8d8d8"/><rect x="684" y="23" width="2" height="688" fill="#b9b9b9"/><polygon points="0,700.5 7.5,708 0,708" fill="#ddd"/></svg><div class="tbar" style="height:24px;border-bottom:1px solid #8e8e8e"></div><div style="position:absolute;left:0;top:23.6px;width:686px;height:1px;background:#efefef"></div><div class="tl" style="left:7px"></div><div class="tl" style="left:27px"></div><div class="tl" style="left:47px"></div><div class="ttl" style="left:122.6px;letter-spacing:-0.19px">Canvas Window -  File: event013.xml  Run: 185649  Event: 14254557</div></div><div class="win" style="left:688px;top:0;width:588px;height:418px;background:#eee"><div class="tbar"></div><div class="tl" style="left:8px"></div><div class="tl" style="left:28px"></div><div class="tl" style="left:48px"></div><div class="ttl" style="left:183px">HYPATIA - Track Momenta Window</div><div class="og" style="position:absolute;left:0;top:23px;width:588px;height:37px"></div><div style="position:absolute;left:335px;top:23px;width:68px;height:37px;background:#eee"></div><svg width="16" height="14" viewBox="0 0 16 14" style="position:absolute;left:50px;top:25px"><defs><linearGradient id="aga" x1="0" y1="0" x2="0" y2="1"><stop offset="0" stop-color="#9fc2ee"/><stop offset="1" stop-color="#2f62b0"/></linearGradient></defs><path d="M0.8 7L7.6 0.8V4.2H15V9.8H7.6V13.2Z" fill="url(#aga)" stroke="#1f3f78" stroke-width="1"/></svg><svg width="16" height="14" viewBox="0 0 16 14" style="position:absolute;left:151px;top:25px"><defs><linearGradient id="agb" x1="0" y1="0" x2="0" y2="1"><stop offset="0" stop-color="#9fc2ee"/><stop offset="1" stop-color="#2f62b0"/></linearGradient></defs><path d="M15.2 7L8.4 0.8V4.2H1V9.8H8.4V13.2Z" fill="url(#agb)" stroke="#1f3f78" stroke-width="1"/></svg><svg width="588" height="37" viewBox="0 0 588 37" style="position:absolute;left:0;top:23px" font-family="'DejaVu Sans Condensed','DejaVu Sans',sans-serif" font-weight="bold" text-anchor="middle" fill="#7aa6d8" stroke="#1f4a82" stroke-width="0.8"><text x="238.4" y="15.6" font-size="21.5" font-family="'DejaVu Sans',sans-serif" transform="translate(238.4 0) scale(0.93 1) translate(-238.4 0)">e</text><text x="305.6" y="14.4" font-size="19.5">μ</text><text x="369" y="13.6" font-size="19" fill="#c6c6c6" stroke="#b4b4b4">γ</text><text x="453.4" y="16.2" font-size="19" transform="translate(453.4 0) scale(0.92 1) translate(-453.4 0)">X</text><text x="556.2" y="16.4" font-size="21" font-weight="normal" font-family="'DejaVu Sans',sans-serif" fill="#3f70b4" stroke-width="0.4">⇔</text></svg><div class="t b" style="position:absolute;left:13.5px;top:46.6px;color:#333;font-size:12px">Previous Event</div><div class="t b" style="position:absolute;left:128.6px;top:46.6px;color:#333;font-size:12px">Next Event</div><div class="t b" style="position:absolute;left:214.5px;top:46.6px;color:#333;font-size:12px">Electron</div><div class="t b" style="position:absolute;left:288.8px;top:46.6px;color:#333;font-size:12px">Muon</div><div class="t b" style="position:absolute;left:347.3px;top:46.6px;color:#9a9a9a;font-size:12px">Photon</div><div class="t b" style="position:absolute;left:415.6px;top:46.6px;color:#333;font-size:12px">Delete Track</div><div class="t b" style="position:absolute;left:517.5px;top:46.6px;color:#333;font-size:12px">Reset Canvas</div><div style="position:absolute;left:0;top:60px;width:588px;height:1px;background:#fff"></div><div style="position:absolute;left:1px;top:63px;width:587px;height:14px;border-top:1px solid #8a949e;border-left:1px solid #8a949e;background:#eee"></div><div class="t" style="position:absolute;left:47px;top:65px;font-family:'Liberation Mono',monospace;font-weight:bold;font-size:11.7px;color:#333;letter-spacing:0">ETMis: 13.073 GeV</div><div class="t" style="position:absolute;left:201px;top:65px;font-family:'Liberation Mono',monospace;font-weight:bold;font-size:11.7px;color:#333;letter-spacing:0;letter-spacing:0.25px">φ: 3.120 rad</div><div class="t" style="position:absolute;left:323.5px;top:65px;font-family:'Liberation Mono',monospace;font-weight:bold;font-size:11.7px;color:#333;letter-spacing:0">Collection: MET_RefFinal</div><div style="position:absolute;left:0;top:77px;width:588px;height:28px;background:linear-gradient(#fcfcfc,#efefef 40%,#e0e0e0)"></div><div style="position:absolute;left:4.5px;top:78px;width:10px;height:26px;background-image:radial-gradient(circle,#76869a 0.6px,transparent 0.85px),radial-gradient(circle,#76869a 0.6px,transparent 0.85px);background-size:4px 4px;background-position:0 0,2px 2px"></div><div style="position:absolute;left:18px;top:80px;width:21px;height:21px;border:1px solid #8c8c8c;background:linear-gradient(#fafafa,#e2e2e2)"></div><svg width="17" height="15" viewBox="0 0 17 15" style="position:absolute;left:20px;top:83px"><rect x="1" y="2" width="15" height="12" fill="#c9dcf6" stroke="#3a73d8" stroke-width="1.4"/><rect x="4" y="0.6" width="9" height="6" fill="#f4f4f4" stroke="#c8c8c8" stroke-width="0.6"/><rect x="1" y="7.2" width="15" height="1.4" fill="#3a73d8"/></svg><div style="position:absolute;left:40px;top:77px;width:382px;height:27px;border:1px solid #7a8a99;border-right-color:#8fa0b4;background:#fff"></div><div class="t" style="position:absolute;left:42px;top:84.7px;font-size:12px;letter-spacing:-0.05px;color:#333">events/group04.zip/event013.xml</div><div style="position:absolute;left:423.5px;top:80px;width:21px;height:21px;border:1px solid #8c8c8c;background:linear-gradient(#f8f8f8,#dcdcdc)"></div><div style="position:absolute;left:445px;top:80px;width:21px;height:21px;border:1px solid #8c8c8c;background:linear-gradient(#f8f8f8,#dcdcdc)"></div><svg width="16" height="14" viewBox="0 0 16 14" style="position:absolute;left:426px;top:83.5px"><defs><linearGradient id="agc" x1="0" y1="0" x2="0" y2="1"><stop offset="0" stop-color="#9fc2ee"/><stop offset="1" stop-color="#2f62b0"/></linearGradient></defs><path d="M0.8 7L7.6 0.8V4.2H15V9.8H7.6V13.2Z" fill="url(#agc)" stroke="#1f3f78" stroke-width="1"/></svg><svg width="16" height="14" viewBox="0 0 16 14" style="position:absolute;left:448px;top:83.5px"><defs><linearGradient id="agd" x1="0" y1="0" x2="0" y2="1"><stop offset="0" stop-color="#9fc2ee"/><stop offset="1" stop-color="#2f62b0"/></linearGradient></defs><path d="M15.2 7L8.4 0.8V4.2H1V9.8H8.4V13.2Z" fill="url(#agd)" stroke="#1f3f78" stroke-width="1"/></svg><div style="position:absolute;left:477px;top:77px;width:108.5px;height:28px;background:#ededed"></div><svg width="104" height="22" viewBox="0 0 104 22" style="position:absolute;left:480px;top:81px" fill="none" stroke="#111" stroke-width="1.3"><circle cx="7.5" cy="10.3" r="4.1"/><circle cx="7.5" cy="10.3" r="1.3" fill="#111" stroke="none"/><path d="M15.2 10.3H23" stroke-width="2"/><path d="M20.6 6.8L25 10.3L20.6 13.8Z" fill="#111" stroke="none"/><circle cx="43.4" cy="10.3" r="3.9"/><path d="M52.6 6.5V13.2Q52.6 15.6 55 15.6H56.6M59.4 14V7.4Q59.4 5 57 5H55.4" stroke-width="2.2"/><path d="M49.8 8.2L52.6 4.2L55.4 8.2ZM56.6 12.8L59.4 16.9L62.2 12.8Z" fill="#111" stroke="none"/><circle cx="79.3" cy="10.3" r="3.9"/><g stroke-width="0.9" fill="#f4f4f4"><path d="M85.6 3.4L90.4 2.4L93.6 4.6L93.2 10.6L88.6 11.6L85.4 9.2Z"/><path d="M88.6 11.6L88.9 5.6L93.6 4.6M88.9 5.6L85.6 3.4" fill="none"/><path d="M88.2 9.4L94.4 7.6L98.6 10.6L98 15.6L92.2 17.6L88 14.8Z"/><path d="M92.2 17.6L92.6 12.4L98.6 10.6M92.6 12.4L88.2 9.4" fill="none"/></g><g fill="#111" stroke="none"><circle cx="87" cy="5.6" r="0.7"/><circle cx="87.2" cy="8.6" r="0.7"/><circle cx="90.8" cy="4" r="0.6"/><circle cx="91.2" cy="8.4" r="0.6"/><circle cx="89.8" cy="12" r="0.7"/><circle cx="90.2" cy="15" r="0.7"/><circle cx="94.2" cy="9.6" r="0.6"/><circle cx="94.6" cy="14.4" r="0.7"/><circle cx="96.8" cy="13.4" r="0.7"/></g></svg><div style="position:absolute;left:0;top:105.6px;width:588px;height:1.4px;background:#dadada"></div><div style="position:absolute;left:0;top:107px;width:588px;height:1px;background:#c2c2c2"></div><div style="position:absolute;left:0;top:108px;width:588px;height:1px;background:#fff"></div><div style="position:absolute;left:0;top:109px;width:588px;height:1px;background:#a2a2a2"></div><svg width="588" height="30" viewBox="0 0 588 30" style="position:absolute;left:0;top:111px"><path d="M2.8 20V7.6L8.8 1.5H153.8V19.6" fill="#c8ddf2" stroke="#6382bf" stroke-width="1"/><path d="M3.8 19V8L9.2 2.5H153" fill="none" stroke="#fff" stroke-width="0.8"/><path d="M153.8 19.5V1.5H361.5V19.5" fill="#eee" stroke="#7a8a99" stroke-width="1"/><path d="M153.8 7.5L159.5 1.5" stroke="#7a8a99"/><rect x="0.5" y="19.6" width="587" height="10" fill="#c8ddf2"/><path d="M153.8 19.6H586" stroke="#6382bf"/><path d="M154.5 20.6H586" stroke="#fff" stroke-width="0.9"/><path d="M0.7 30V19.6H2.8" stroke="#6382bf" fill="none" stroke-width="1.4"/><path d="M24.5 25.4H585M2.5 30V25.4H6.2" stroke="#6382bf" stroke-width="1" fill="none"/><path d="M585 25.4V30" stroke="#7a8a99" fill="none"/><path d="M24.5 26.4H584M3.5 30V26.4H6.2M584 26.4V30" stroke="#fff" stroke-width="0.8" fill="none"/></svg><div class="t b" style="position:absolute;left:59.5px;top:116px;font-size:12px">Tracks</div><div class="t b" style="position:absolute;left:210.5px;top:116px;font-size:12px">Physics Objects</div><div style="position:absolute;left:0;top:140px;width:588px;height:278px;background:#c8ddf2;border-left:1.4px solid #6382bf"></div><div style="position:absolute;left:0;top:414.6px;width:588px;height:1px;background:#6382bf"></div><div style="position:absolute;left:0;top:415.6px;width:588px;height:3px;background:#e9e9e9"></div><div style="position:absolute;left:2px;top:140px;width:2px;height:273px;background:#fff;border-left:1px solid #6382bf"></div><div style="position:absolute;left:583.6px;top:140px;width:2px;height:273px;background:#7a8a99;border-left:1px solid #fff"></div><div style="position:absolute;left:3px;top:412px;width:582px;height:1px;background:#fff"></div><div style="position:absolute;left:2px;top:413px;width:583.6px;height:1px;background:#7a8a99"></div><div style="position:absolute;left:4px;top:140px;width:578px;height:271px;background:#fff;border:1px solid #7a8a99;overflow:hidden"><div style="position:absolute;left:0;top:0;width:577px;height:18px;background:#eee;border-bottom:1px solid #7a8a99"></div><div class="cell" style="left:1.2px;top:2px;width:163.5px;text-align:center;color:#333">Track</div><div style="position:absolute;left:163px;top:0;width:1px;height:18px;background:#7a8a99"></div><div style="position:absolute;left:164px;top:0;width:1px;height:17px;background:#fff"></div><div class="cell" style="left:164.7px;top:2px;width:39px;text-align:center;color:#333">+/-</div><div style="position:absolute;left:202px;top:0;width:1px;height:18px;background:#7a8a99"></div><div style="position:absolute;left:203px;top:0;width:1px;height:17px;background:#fff"></div><div class="cell" style="left:203.7px;top:2px;width:90px;text-align:center;color:#333">P [GeV]</div><div style="position:absolute;left:292px;top:0;width:1px;height:18px;background:#7a8a99"></div><div style="position:absolute;left:293px;top:0;width:1px;height:17px;background:#fff"></div><div class="cell" style="left:293.7px;top:2px;width:89px;text-align:center;color:#333">Pt [GeV]</div><div style="position:absolute;left:381px;top:0;width:1px;height:18px;background:#7a8a99"></div><div style="position:absolute;left:382px;top:0;width:1px;height:17px;background:#fff"></div><div class="cell" style="left:382.7px;top:2px;width:90px;text-align:center;color:#333">φ</div><div style="position:absolute;left:471px;top:0;width:1px;height:18px;background:#7a8a99"></div><div style="position:absolute;left:472px;top:0;width:1px;height:17px;background:#fff"></div><div class="cell" style="left:472.7px;top:2px;width:89px;text-align:center;color:#333">θ</div><div style="position:absolute;left:560px;top:0;width:1px;height:18px;background:#7a8a99"></div><div style="position:absolute;left:561px;top:0;width:1px;height:17px;background:#fff"></div><div style="position:absolute;left:0;top:34px;width:561px;height:1px;background:#7a8a99"></div><div class="cell" style="left:2px;top:18.5px">Tracks 0</div><div class="cell" style="left:165.5px;top:18.5px">+</div><div class="cell" style="left:204.5px;top:18.5px">5.23</div><div class="cell" style="left:294.5px;top:18.5px">1.28</div><div class="cell" style="left:383.5px;top:18.5px">-0.782</div><div class="cell" style="left:473.5px;top:18.5px">2.895</div><div style="position:absolute;left:0;top:50px;width:561px;height:1px;background:#7a8a99"></div><div class="cell" style="left:2px;top:34.5px">Tracks 4</div><div class="cell" style="left:165.5px;top:34.5px">+</div><div class="cell" style="left:204.5px;top:34.5px">3.70</div><div class="cell" style="left:294.5px;top:34.5px">1.09</div><div class="cell" style="left:383.5px;top:34.5px">-0.886</div><div class="cell" style="left:473.5px;top:34.5px">2.841</div><div style="position:absolute;left:0;top:66px;width:561px;height:1px;background:#7a8a99"></div><div class="cell" style="left:2px;top:50.5px">Tracks 5</div><div class="cell" style="left:165.5px;top:50.5px">-</div><div class="cell" style="left:204.5px;top:50.5px">4.98</div><div class="cell" style="left:294.5px;top:50.5px">1.26</div><div class="cell" style="left:383.5px;top:50.5px">-1.768</div><div class="cell" style="left:473.5px;top:50.5px">0.256</div><div style="position:absolute;left:0;top:82px;width:561px;height:1px;background:#7a8a99"></div><div class="cell" style="left:2px;top:66.5px">Tracks 6</div><div class="cell" style="left:165.5px;top:66.5px">+</div><div class="cell" style="left:204.5px;top:66.5px">5.02</div><div class="cell" style="left:294.5px;top:66.5px">2.43</div><div class="cell" style="left:383.5px;top:66.5px">0.400</div><div class="cell" style="left:473.5px;top:66.5px">0.506</div><div style="position:absolute;left:0;top:98px;width:561px;height:1px;background:#7a8a99"></div><div class="cell" style="left:2px;top:82.5px">Tracks 7</div><div class="cell" style="left:165.5px;top:82.5px">+</div><div class="cell" style="left:204.5px;top:82.5px">5.52</div><div class="cell" style="left:294.5px;top:82.5px">1.24</div><div class="cell" style="left:383.5px;top:82.5px">-0.000</div><div class="cell" style="left:473.5px;top:82.5px">2.915</div><div style="position:absolute;left:0;top:114px;width:561px;height:1px;background:#7a8a99"></div><div class="cell" style="left:2px;top:98.5px">Tracks 10</div><div class="cell" style="left:165.5px;top:98.5px">-</div><div class="cell" style="left:204.5px;top:98.5px">3.93</div><div class="cell" style="left:294.5px;top:98.5px">1.06</div><div class="cell" style="left:383.5px;top:98.5px">-0.737</div><div class="cell" style="left:473.5px;top:98.5px">2.869</div><div style="position:absolute;left:0;top:130px;width:561px;height:1px;background:#7a8a99"></div><div class="cell" style="left:2px;top:114.5px">Tracks 11</div><div class="cell" style="left:165.5px;top:114.5px">+</div><div class="cell" style="left:204.5px;top:114.5px">3.03</div><div class="cell" style="left:294.5px;top:114.5px">1.44</div><div class="cell" style="left:383.5px;top:114.5px">2.820</div><div class="cell" style="left:473.5px;top:114.5px">0.495</div><div style="position:absolute;left:0;top:146px;width:561px;height:1px;background:#7a8a99"></div><div class="cell" style="left:2px;top:130.5px">Tracks 15</div><div class="cell" style="left:165.5px;top:130.5px">-</div><div class="cell" style="left:204.5px;top:130.5px">2.35</div><div class="cell" style="left:294.5px;top:130.5px">1.51</div><div class="cell" style="left:383.5px;top:130.5px">2.260</div><div class="cell" style="left:473.5px;top:130.5px">2.445</div><div style="position:absolute;left:0;top:162px;width:561px;height:1px;background:#7a8a99"></div><div class="cell" style="left:2px;top:146.5px">Tracks 21</div><div class="cell" style="left:165.5px;top:146.5px">-</div><div class="cell" style="left:204.5px;top:146.5px">2.03</div><div class="cell" style="left:294.5px;top:146.5px">1.78</div><div class="cell" style="left:383.5px;top:146.5px">0.170</div><div class="cell" style="left:473.5px;top:146.5px">1.065</div><div style="position:absolute;left:0;top:178px;width:561px;height:1px;background:#7a8a99"></div><div class="cell" style="left:2px;top:162.5px">Tracks 26</div><div class="cell" style="left:165.5px;top:162.5px">+</div><div class="cell" style="left:204.5px;top:162.5px">1.41</div><div class="cell" style="left:294.5px;top:162.5px">1.24</div><div class="cell" style="left:383.5px;top:162.5px">-2.876</div><div class="cell" style="left:473.5px;top:162.5px">1.068</div><div style="position:absolute;left:0;top:194px;width:561px;height:1px;background:#7a8a99"></div><div class="cell" style="left:2px;top:178.5px">Tracks 29</div><div class="cell" style="left:165.5px;top:178.5px">-</div><div class="cell" style="left:204.5px;top:178.5px">2.08</div><div class="cell" style="left:294.5px;top:178.5px">1.34</div><div class="cell" style="left:383.5px;top:178.5px">0.148</div><div class="cell" style="left:473.5px;top:178.5px">2.439</div><div style="position:absolute;left:0;top:210px;width:561px;height:1px;background:#7a8a99"></div><div class="cell" style="left:2px;top:194.5px">Tracks 36</div><div class="cell" style="left:165.5px;top:194.5px">-</div><div class="cell" style="left:204.5px;top:194.5px">1.36</div><div class="cell" style="left:294.5px;top:194.5px">1.36</div><div class="cell" style="left:383.5px;top:194.5px">-1.320</div><div class="cell" style="left:473.5px;top:194.5px">1.665</div><div style="position:absolute;left:0;top:226px;width:561px;height:1px;background:#7a8a99"></div><div class="cell" style="left:2px;top:210.5px">Tracks 37</div><div class="cell" style="left:165.5px;top:210.5px">-</div><div class="cell" style="left:204.5px;top:210.5px">1.25</div><div class="cell" style="left:294.5px;top:210.5px">1.10</div><div class="cell" style="left:383.5px;top:210.5px">-0.811</div><div class="cell" style="left:473.5px;top:210.5px">1.076</div><div style="position:absolute;left:0;top:242px;width:561px;height:1px;background:#7a8a99"></div><div class="cell" style="left:2px;top:226.5px">Tracks 38</div><div class="cell" style="left:165.5px;top:226.5px">-</div><div class="cell" style="left:204.5px;top:226.5px">4.73</div><div class="cell" style="left:294.5px;top:226.5px">1.05</div><div class="cell" style="left:383.5px;top:226.5px">1.665</div><div class="cell" style="left:473.5px;top:226.5px">0.223</div><div style="position:absolute;left:0;top:258px;width:561px;height:1px;background:#7a8a99"></div><div class="cell" style="left:2px;top:242.5px">Tracks 39</div><div class="cell" style="left:165.5px;top:242.5px">-</div><div class="cell" style="left:204.5px;top:242.5px">5.60</div><div class="cell" style="left:294.5px;top:242.5px">1.61</div><div class="cell" style="left:383.5px;top:242.5px">-1.044</div><div class="cell" style="left:473.5px;top:242.5px">2.849</div><div style="position:absolute;left:0;top:274px;width:561px;height:1px;background:#7a8a99"></div><div class="cell" style="left:2px;top:258.5px">Tracks 52</div><div class="cell" style="left:165.5px;top:258.5px">+</div><div class="cell" style="left:204.5px;top:258.5px">2.16</div><div class="cell" style="left:294.5px;top:258.5px">1.78</div><div class="cell" style="left:383.5px;top:258.5px">2.824</div><div class="cell" style="left:473.5px;top:258.5px">2.170</div><div style="position:absolute;left:163px;top:18px;width:1px;height:260px;background:#7a8a99"></div><div style="position:absolute;left:202px;top:18px;width:1px;height:260px;background:#7a8a99"></div><div style="position:absolute;left:292px;top:18px;width:1px;height:260px;background:#7a8a99"></div><div style="position:absolute;left:381px;top:18px;width:1px;height:260px;background:#7a8a99"></div><div style="position:absolute;left:471px;top:18px;width:1px;height:260px;background:#7a8a99"></div><div style="position:absolute;left:560px;top:18px;width:1px;height:260px;background:#7a8a99"></div><div style="position:absolute;left:0;top:257px;width:561px;height:13px;background:linear-gradient(rgba(238,238,238,0),rgba(236,236,236,0.55))"></div><div style="position:absolute;left:561px;top:18px;width:15.5px;height:252px;background:#eee"></div><div style="position:absolute;left:561px;top:18px;width:15.5px;height:15px;background:#f2f2f2;border-bottom:1px solid #7a8a99"></div><div style="position:absolute;left:561px;top:255px;width:15.5px;height:15px;background:#f2f2f2;border-top:1px solid #7a8a99"></div><div style="position:absolute;left:561px;top:33px;width:15.5px;height:146px;border:1px solid #6382bf;background:linear-gradient(90deg,#dde8f3,#fff 30%,#dde8f3 60%,#b8cfe5)"></div><svg width="16" height="252" viewBox="0 0 16 252" style="position:absolute;left:561px;top:18px"><path d="M3.5 10.5L8 6L12.5 10.5Z" fill="#222"/><path d="M3.5 241.5L8 246L12.5 241.5Z" fill="#222"/><path d="M4.5 83.5h8M4.5 86.5h8M4.5 89.5h8" stroke="#6382bf"/></svg></div></div><div class="win" style="left:687px;top:418px;width:587px;height:293px;background:#eee;border-radius:5px 5px 0 0"><div class="tbar" style="height:22px;background:linear-gradient(#ebebeb,#d6d6d6 50%,#bfbfbf);border-bottom:1px solid #7d7d7d;border-top:1px solid #f2f2f2"></div><div style="position:absolute;left:8px;top:5px;width:12.4px;height:12.4px;border-radius:7px;border:0.8px solid #c23b35;background:radial-gradient(circle at 50% 22%,#fff 0,#ff5a52 38%,#e0443e 75%)"></div><div style="position:absolute;left:27.8px;top:5px;width:12.4px;height:12.4px;border-radius:7px;border:0.8px solid #c98e1c;background:radial-gradient(circle at 50% 22%,#fff 0,#ffbe2f 38%,#e6a323 75%)"></div><div style="position:absolute;left:47.6px;top:5px;width:12.4px;height:12.4px;border-radius:7px;border:0.8px solid #1f9a31;background:radial-gradient(circle at 50% 22%,#fff 0,#2fcf46 38%,#27b03b 75%)"></div><div class="ttl" style="left:208px;top:4.3px;color:#3c3c3c;letter-spacing:0.12px">HYPATIA - Control Window</div><div style="position:absolute;left:536.5px;top:22px;width:50px;height:134px;background:#b8cfe5;border-left:1.2px solid #7a8a99;border-right:1px solid #8f9fb3"></div><div class="og" style="position:absolute;left:536.5px;top:156px;width:50px;height:134px;border-left:1.2px solid #7a8a99;border-top:1.8px solid #748498;border-right:1px solid #8f9fb3"></div><svg width="20" height="20" viewBox="0 0 20 20" style="position:absolute;left:552px;top:79px"><defs><radialGradient id="mg" cx="0.4" cy="0.35" r="0.7"><stop offset="0" stop-color="#e8f6ff"/><stop offset="0.5" stop-color="#8fd0f7"/><stop offset="1" stop-color="#5fb2ee"/></radialGradient></defs><path d="M10.8 10.2L17 16" stroke="#9a9a9a" stroke-width="1.9"/><circle cx="7.7" cy="7" r="4.3" fill="url(#mg)" stroke="#6d9fd0" stroke-width="0.8"/><path d="M11.6 3.4A2.9 2.9 0 1 1 14.6 8.2" fill="none" stroke="#6a3db4" stroke-width="1.8"/><path d="M3.2 13.4H9.8M6.5 10.1V16.7" stroke="#444" stroke-width="2.4"/><path d="M3.2 13.4H9.8M6.5 10.1V16.7" stroke="#fff" stroke-width="1"/></svg><svg width="16" height="18" viewBox="0 0 16 18" style="position:absolute;left:552px;top:214px"><path d="M5.5 9V2.6Q5.6 1.4 6.7 1.4Q7.8 1.4 7.9 2.6V7Q9 6.2 9.8 7.2Q11 6.6 11.7 7.8Q13.6 7.4 13.8 9.4V12.4Q13.6 15.4 11.6 16.6H6.6Q5 15.6 3.6 13L2 10.4Q2 9 3.4 9.2Z" fill="#fff" stroke="#111" stroke-width="1"/><path d="M8 12.5V15M10 12.5V15M12 12.5V15" stroke="#111" stroke-width="0.8"/></svg><svg width="540" height="271" viewBox="0 0 540 271" style="position:absolute;left:0;top:22px"><path d="M136.1 20.5V2.5H355.5V20.5" fill="#eee" stroke="#7a8a99"/><path d="M136.1 8.5L142 2.5" stroke="#7a8a99"/><path d="M355.5 20.5V2.5H470.5V20.5" fill="#eee" stroke="#7a8a99"/><path d="M355.5 8.5L361 2.5" stroke="#7a8a99"/><rect x="0.8" y="20.6" width="535.7" height="249" fill="#c8ddf2"/><path d="M2.5 21V8L8 2.5H136.1V20.6" fill="#c8ddf2" stroke="#6382bf"/><path d="M3.5 20V8.4L8.4 3.5H135" fill="none" stroke="#fff" stroke-width="0.8"/><path d="M136.1 20.6H536.4M1.2 269.5V20.6H2.5" stroke="#6382bf" fill="none" stroke-width="1.2"/><path d="M536.4 20.6V269.5" stroke="#7a8a99" fill="none" stroke-width="1.2"/><rect x="533.9" y="21.4" width="1.8" height="248" fill="#dbe8f6"/><rect x="2" y="24.3" width="531.4" height="20.3" fill="#eee"/><path d="M4.6 44.5V32.2L10.2 26.5H87.4V44.5" fill="#eee" stroke="#7a8a99"/><path d="M87.4 44.5V32.2L93 26.5H138.6V44.5" fill="#eee" stroke="#7a8a99"/><path d="M187.3 44.5V32.2L192.9 26.5H242.5V44.5" fill="#eee" stroke="#7a8a99"/><path d="M242.5 44.5V32.2L248.1 26.5H291.9V44.5" fill="#eee" stroke="#7a8a99"/><path d="M291.9 44.5V32.2L297.5 26.5H369.6V44.5" fill="#eee" stroke="#7a8a99"/><path d="M369.6 44.5V32.2L375.2 26.5H437.1V44.5" fill="#eee" stroke="#7a8a99"/><path d="M437.1 44.5V32.2L442.7 26.5H517.3V44.5" fill="#eee" stroke="#7a8a99"/><rect x="2.2" y="44.4" width="531.5" height="222.5" fill="#c8ddf2"/><path d="M2.6 266.5V44.5H533.6" stroke="#6382bf" fill="none"/><path d="M533.6 44.5V266.5" stroke="#7a8a99" fill="none"/><path d="M2.6 266.5H533.6" stroke="#7a8a99"/><rect x="531.2" y="45" width="1.8" height="221" fill="#dbe8f6"/><rect x="139.1" y="43" width="47.7" height="3" fill="#c8ddf2"/><path d="M138.6 45V32.2L144.2 26.4H187.3V45" fill="#c8ddf2" stroke="#6382bf"/><path d="M139.6 45V32.6L144.6 27.4H186.3" fill="none" stroke="#fff" stroke-width="0.8"/><rect x="84.5" y="48.5" width="446" height="214.6" fill="#eee"/><path d="M84.5 263V48.5H530.5" stroke="#6382bf" fill="none"/><path d="M530.5 48.5V263" stroke="#7a8a99" fill="none"/><path d="M84.5 263.2H530.5" stroke="#7a8a99"/><path d="M85.5 262.2H529.5" stroke="#fff"/><rect x="85" y="49" width="445" height="2.6" fill="#c8ddf2"/><rect x="528" y="49" width="2" height="213" fill="#dbe8f6"/><path d="M527.8 52V262" stroke="#7a8a99"/><path d="M85.2 51H12.3L6.8 56.5V68.5H85.2Z" fill="#c8ddf2" stroke="none"/><path d="M84.5 51H12.3L6.8 56.5V73.5" fill="none" stroke="#6382bf"/><path d="M84.5 52H12.7L7.8 57V72.5" fill="none" stroke="#fff" stroke-width="0.8"/><path d="M84.5 68.5H12.3L6.8 74V86.3H84.5" fill="#eee" stroke="#7a8a99"/><path d="M84.5 86.3H12.3L6.8 91.8V104H84.5" fill="#eee" stroke="#7a8a99"/><path d="M84.5 104H12.3L6.8 109.5V122H84.5" fill="#eee" stroke="#7a8a99"/><path d="M84.5 122H12.3L6.8 127.5V140H84.5" fill="#eee" stroke="#7a8a99"/></svg><div class="t b" style="position:absolute;left:13.3px;top:28.4px;font-size:12px">Parameter Control</div><div class="t b" style="position:absolute;left:146.6px;top:28.4px;font-size:12px">Interaction and Window Control</div><div class="t b" style="position:absolute;left:366.1px;top:28.4px;font-size:12px">Output Display</div><div class="t b" style="position:absolute;left:14.5px;top:52.4px;font-size:12px">Projection</div><div class="t b" style="position:absolute;left:98.4px;top:52.4px;font-size:12px">Data</div><div class="t b" style="position:absolute;left:148.5px;top:52.4px;font-size:12px">Cuts</div><div class="t b" style="position:absolute;left:197.4px;top:52.4px;font-size:12px">InDet</div><div class="t b" style="position:absolute;left:252.4px;top:52.4px;font-size:12px">Calo</div><div class="t b" style="position:absolute;left:302.6px;top:52.4px;font-size:12px">MuonDet</div><div class="t b" style="position:absolute;left:380.7px;top:52.4px;font-size:12px">Objects</div><div class="t b" style="position:absolute;left:447.5px;top:52.4px;font-size:12px">Geometry</div><div class="t b" style="position:absolute;left:6px;width:78px;text-align:center;top:76.4px;font-size:12px">InDet</div><div class="t b" style="position:absolute;left:6px;width:78px;text-align:center;top:94.2px;font-size:12px">Calo</div><div class="t b" style="position:absolute;left:6px;width:78px;text-align:center;top:111.9px;font-size:12px">MuonDet</div><div class="t b" style="position:absolute;left:6px;width:78px;text-align:center;top:129.7px;font-size:12px">Objects</div><div class="t b" style="position:absolute;left:6px;width:78px;text-align:center;top:147.4px;font-size:12px">ATLAS</div><div style="position:absolute;left:86.5px;top:79px;width:440px;height:201.5px;overflow:hidden;border-top:1px solid #7a8a99;border-left:1px solid #7a8a99"><div style="position:absolute;left:0;top:0;width:424px;height:19px;background:#eee;border-bottom:1px solid #7a8a99"></div><div style="position:absolute;left:215.5px;top:0;width:1px;height:19px;background:#7a8a99"></div><div style="position:absolute;left:216.5px;top:0;width:1px;height:18px;background:#fff"></div><div style="position:absolute;left:423px;top:0;width:1px;height:19px;background:#7a8a99"></div><div style="position:absolute;left:424px;top:0;width:16px;height:19px;background:#eee;border-right:1px solid #7a8a99"></div><div class="cell" style="left:0;top:1.6px;width:216px;text-align:center;color:#333">Name</div><div class="cell" style="left:216px;top:1.6px;width:208px;text-align:center;color:#333">Value</div><div style="position:absolute;left:0;top:20px;width:194.5px;height:22.6px;background:#ccc"></div><div style="position:absolute;left:3.3px;top:25px;width:13px;height:13px;border:1px solid #7a8a99;background:linear-gradient(135deg,#fdfdfd,#dfe9f3 60%,#c4d6ea)"></div><svg width="13" height="13" viewBox="0 0 13 13" style="position:absolute;left:3.3px;top:25px"><path d="M2.6 5L4.4 4.8L5.7 7.6L10.5 2.2L10.7 3.4L5.6 10.6Z" fill="#111" stroke="#111" stroke-width="0.5" stroke-linejoin="round"/></svg><div class="t b" style="position:absolute;left:21.8px;top:25.4px;color:#0000f0;font-size:12px">|Pt|</div><div class="cell" style="left:200.5px;top:23px;color:#333;letter-spacing:1.5px">&gt;</div><div style="position:absolute;left:217.5px;top:19px;width:206.5px;height:23px;background:#fff;border:1px solid #7a8a99;border-bottom:1.6px solid #94a4b6"></div><div class="cell" style="left:219.8px;top:23.4px;color:#333;letter-spacing:0px">1.0 GeV</div><div style="position:absolute;left:0;top:45px;width:194.5px;height:22.6px;background:#ccc"></div><div style="position:absolute;left:3.3px;top:50px;width:13px;height:13px;border:1px solid #7a8a99;background:linear-gradient(135deg,#fdfdfd,#dfe9f3 60%,#c4d6ea)"></div><svg width="13" height="13" viewBox="0 0 13 13" style="position:absolute;left:3.3px;top:50px"><path d="M2.6 5L4.4 4.8L5.7 7.6L10.5 2.2L10.7 3.4L5.6 10.6Z" fill="#111" stroke="#111" stroke-width="0.5" stroke-linejoin="round"/></svg><div class="t b" style="position:absolute;left:21.8px;top:50.4px;color:#0000f0;font-size:12px">|d0|</div><div class="cell" style="left:200.5px;top:48px;color:#333;letter-spacing:1.5px">&lt;</div><div style="position:absolute;left:217.5px;top:44px;width:206.5px;height:23px;background:#fff;border:1px solid #7a8a99;border-bottom:1.6px solid #94a4b6"></div><div class="cell" style="left:219.8px;top:48.4px;color:#333;letter-spacing:0px">2.5 mm</div><div style="position:absolute;left:0;top:70px;width:194.5px;height:22.6px;background:#ccc"></div><div style="position:absolute;left:3.3px;top:75px;width:13px;height:13px;border:1px solid #7a8a99;background:linear-gradient(135deg,#fdfdfd,#dfe9f3 60%,#c4d6ea)"></div><svg width="13" height="13" viewBox="0 0 13 13" style="position:absolute;left:3.3px;top:75px"><path d="M2.6 5L4.4 4.8L5.7 7.6L10.5 2.2L10.7 3.4L5.6 10.6Z" fill="#111" stroke="#111" stroke-width="0.5" stroke-linejoin="round"/></svg><div class="t b" style="position:absolute;left:21.8px;top:75.4px;color:#0000f0;font-size:12px">|z0|</div><div class="cell" style="left:200.5px;top:73px;color:#333;letter-spacing:1.5px">&lt;</div><div style="position:absolute;left:217.5px;top:69px;width:206.5px;height:23px;background:#fff;border:1px solid #7a8a99;border-bottom:1.6px solid #94a4b6"></div><div class="cell" style="left:219.8px;top:73.4px;color:#333;letter-spacing:0px">20.0 cm</div><div style="position:absolute;left:0;top:95px;width:194.5px;height:22.6px;background:#ccc"></div><div style="position:absolute;left:3.3px;top:100px;width:13px;height:13px;border:1px solid #7a8a99;background:linear-gradient(135deg,#fdfdfd,#dfe9f3 60%,#c4d6ea)"></div><div class="t b" style="position:absolute;left:21.8px;top:100.4px;color:#0000f0;font-size:12px">|d0 Loose|</div><div class="cell" style="left:200.5px;top:98px;color:#333;letter-spacing:1.5px">&lt;</div><div style="position:absolute;left:217.5px;top:94px;width:206.5px;height:23px;background:#fff;border:1px solid #7a8a99;border-bottom:1.6px solid #94a4b6"></div><div class="cell" style="left:219.8px;top:98.4px;color:#333;letter-spacing:0px">2.0 cm</div><div style="position:absolute;left:0;top:120px;width:194.5px;height:22.6px;background:#ccc"></div><div style="position:absolute;left:3.3px;top:125px;width:13px;height:13px;border:1px solid #7a8a99;background:linear-gradient(135deg,#fdfdfd,#dfe9f3 60%,#c4d6ea)"></div><div class="t b" style="position:absolute;left:21.8px;top:125.4px;color:#0000f0;font-size:12px">|z0-zVtx|</div><div class="cell" style="left:200.5px;top:123px;color:#333;letter-spacing:1.5px">&lt;</div><div style="position:absolute;left:217.5px;top:119px;width:206.5px;height:23px;background:#fff;border:1px solid #7a8a99;border-bottom:1.6px solid #94a4b6"></div><div class="cell" style="left:219.8px;top:123.4px;color:#333;letter-spacing:0px">2.5 mm</div><div style="position:absolute;left:0;top:145px;width:194.5px;height:22.6px;background:#ccc"></div><div style="position:absolute;left:3.3px;top:150px;width:13px;height:13px;border:1px solid #7a8a99;background:linear-gradient(135deg,#fdfdfd,#dfe9f3 60%,#c4d6ea)"></div><div class="t b" style="position:absolute;left:21.8px;top:150.4px;color:#0000f0;font-size:12px">Layer</div><div class="cell" style="left:200.5px;top:148px;color:#333;letter-spacing:1.5px">&gt;</div><div style="position:absolute;left:217.5px;top:144px;width:206.5px;height:23px;background:#fff;border:1px solid #7a8a99;border-bottom:1.6px solid #94a4b6"></div><div class="cell" style="left:219.8px;top:148.4px;color:#333;letter-spacing:0px">0</div><div style="position:absolute;left:0;top:170px;width:185px;height:22.6px;background:#ccc"></div><div style="position:absolute;left:3.3px;top:175px;width:13px;height:13px;border:1px solid #7a8a99;background:linear-gradient(135deg,#fdfdfd,#dfe9f3 60%,#c4d6ea)"></div><div class="t b" style="position:absolute;left:21.8px;top:175.4px;color:#0000f0;font-size:12px">Number Pixel Hits</div><div class="cell" style="left:190px;top:173px;color:#333;letter-spacing:1.5px">&gt;=</div><div style="position:absolute;left:217.5px;top:169px;width:206.5px;height:23px;background:#fff;border:1px solid #7a8a99;border-bottom:1.6px solid #94a4b6"></div><div class="cell" style="left:219.8px;top:173.4px;color:#333;letter-spacing:0px">3</div><div style="position:absolute;left:0;top:195px;width:185px;height:22.6px;background:#ccc"></div><div style="position:absolute;left:3.3px;top:200px;width:13px;height:13px;border:1px solid #7a8a99;background:linear-gradient(135deg,#fdfdfd,#dfe9f3 60%,#c4d6ea)"></div><div class="t b" style="position:absolute;left:21.8px;top:200.4px;color:#0000f0;font-size:12px"></div><div style="position:absolute;left:217.5px;top:194px;width:206.5px;height:23px;background:#fff;border:1px solid #7a8a99;border-bottom:1.6px solid #94a4b6"></div><div style="position:absolute;left:267px;top:22.5px;width:1px;height:15px;background:#111"></div><div style="position:absolute;left:424px;top:19.5px;width:15.5px;height:182px;background:#eee;border-right:1px solid #7a8a99"></div><div style="position:absolute;left:424px;top:19.5px;width:15.5px;height:15px;background:#f2f2f2;border-bottom:1px solid #7a8a99"></div><div style="position:absolute;left:424px;top:186px;width:15.5px;height:15px;background:#f2f2f2;border-top:1px solid #7a8a99"></div><div style="position:absolute;left:424px;top:34.5px;width:15.5px;height:37px;border:1px solid #6382bf;background:linear-gradient(90deg,#dde8f3,#fff 30%,#dde8f3 60%,#b8cfe5)"></div><svg width="16" height="182" viewBox="0 0 16 182" style="position:absolute;left:424px;top:19.5px"><path d="M3.5 10L8 5.5L12.5 10Z" fill="#222"/><path d="M3.5 171.5L8 176L12.5 171.5Z" fill="#222"/><path d="M4.5 30.5h7M4.5 33.5h7M4.5 36.5h7" stroke="#6382bf"/></svg></div><div style="position:absolute;left:0;top:291.5px;width:587px;height:3px;background:#15161a"></div></div></body></html>
